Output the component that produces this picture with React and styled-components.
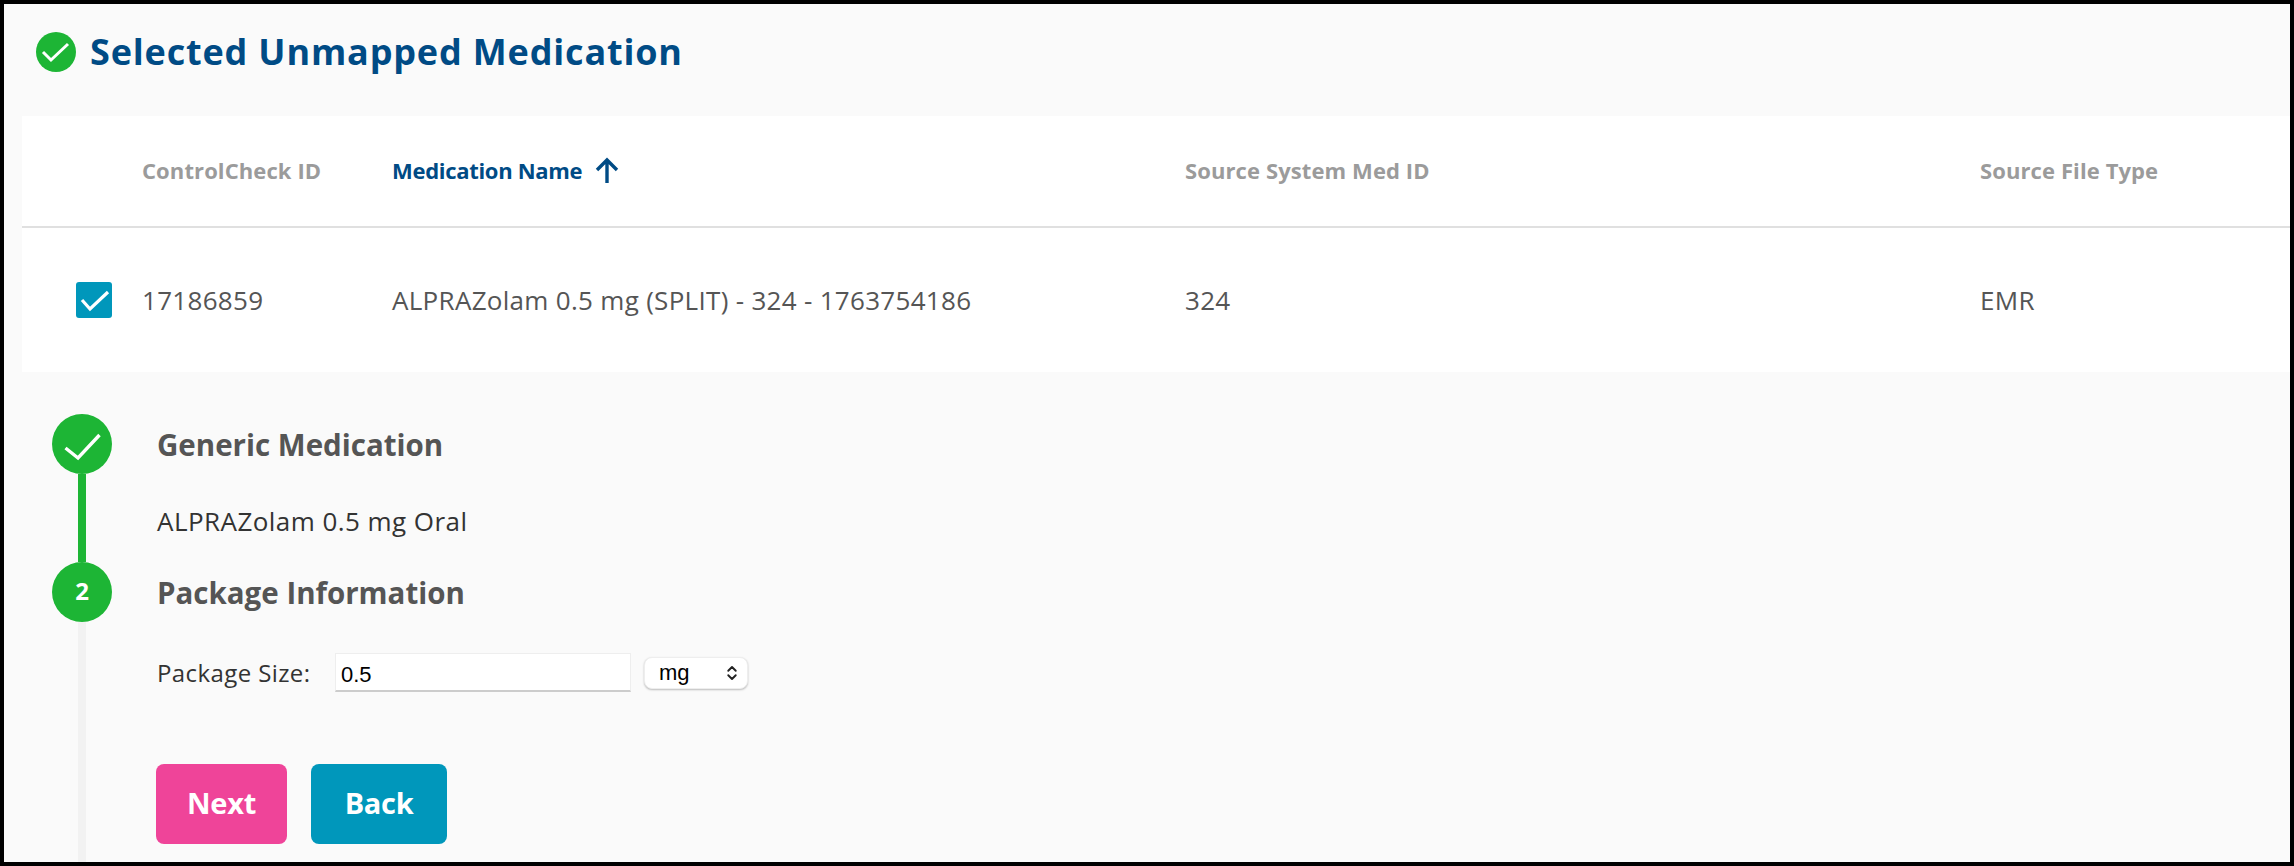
import React from "react";
import styled, { createGlobalStyle } from "styled-components";
import { ChevronsUpDown } from "lucide-react";

const FONT = `"Open Sans", "Liberation Sans", sans-serif`;

const COLORS = {
  navy: "#004b85",
  green: "#1db535",
  teal: "#0097bb",
  pink: "#ef4499",
  muted: "#9b9b9b",
  text: "#555555",
  dark: "#333333",
  page: "#fafafa",
};

const COLUMNS = "120px 250px 793px 795px 1fr";

const GlobalStyle = createGlobalStyle`
  html, body {
    margin: 0;
    padding: 0;
    background: #000;
  }
  * {
    box-sizing: border-box;
  }
`;

// The tick is drawn a little differently at each size, so the path comes in as a prop
const Tick = ({ size, stroke, d }) => (
  <svg width={size} height={size} viewBox={`0 0 ${size} ${size}`} fill="none">
    <path d={d} stroke="#fff" strokeWidth={stroke} />
  </svg>
);

const SortArrow = () => (
  <svg width="24" height="26" viewBox="0 0 24 26" fill="none">
    <path
      d="M12 26V3M2 13L12 3L22 13"
      stroke="currentColor"
      strokeWidth="3.4"
    />
  </svg>
);

const App = () => (
  <>
    <GlobalStyle />
    <Frame>
      <Header>
        <HeaderBadge>
          <Tick size={40} stroke={3} d="M7 20 L15 28 L32 12" />
        </HeaderBadge>
        <Title>Selected Unmapped Medication</Title>
      </Header>

      <Card>
        <HeadRow>
          <span />
          <HeadCell>ControlCheck ID</HeadCell>
          <HeadCell $active>
            Medication Name
            <SortArrow />
          </HeadCell>
          <HeadCell>Source System Med ID</HeadCell>
          <HeadCell>Source File Type</HeadCell>
        </HeadRow>
        <BodyRow>
          <CheckCell>
            <CheckBox>
              <Tick size={36} stroke={3.2} d="M6 18 L14 27 L32 10" />
            </CheckBox>
          </CheckCell>
          <BodyCell>17186859</BodyCell>
          <BodyCell>ALPRAZolam 0.5 mg (SPLIT) - 324 - 1763754186</BodyCell>
          <BodyCell>324</BodyCell>
          <BodyCell>EMR</BodyCell>
        </BodyRow>
      </Card>

      <Steps>
        <Step $height={148}>
          <Rail>
            <StepCircle>
              <Tick size={60} stroke={3.4} d="M13.5 34 L26 44 L47.5 21" />
            </StepCircle>
            <RailLine $done />
          </Rail>
          <StepBody>
            <StepTitle>Generic Medication</StepTitle>
            <SelectedValue>ALPRAZolam 0.5 mg Oral</SelectedValue>
          </StepBody>
        </Step>

        <Step>
          <Rail>
            <StepCircle>2</StepCircle>
            <RailLine />
          </Rail>
          <StepBody>
            <StepTitle>Package Information</StepTitle>
            <Field>
              <FieldLabel htmlFor="package-size">Package Size:</FieldLabel>
              <SizeInput id="package-size" defaultValue="0.5" />
              <UnitWrap>
                <UnitSelect defaultValue="mg">
                  <option value="mg">mg</option>
                </UnitSelect>
                <UnitArrows>
                  <ChevronsUpDown size={18} strokeWidth={2.5} />
                </UnitArrows>
              </UnitWrap>
            </Field>
            <Actions>
              <ActionButton $color={COLORS.pink} $width={131}>
                Next
              </ActionButton>
              <ActionButton $color={COLORS.teal} $width={136}>
                Back
              </ActionButton>
            </Actions>
          </StepBody>
        </Step>
      </Steps>
    </Frame>
  </>
);

const Frame = styled.div`
  width: 2294px;
  height: 866px;
  border: 4px solid #000;
  background: ${COLORS.page};
  font-family: ${FONT};
  overflow: hidden;
  display: flex;
  flex-direction: column;
`;

const Header = styled.header`
  height: 112px;
  padding: 28px 0 0 32px;
  display: flex;
  align-items: flex-start;
  gap: 14px;
`;

const HeaderBadge = styled.div`
  width: 40px;
  height: 40px;
  border-radius: 50%;
  background: ${COLORS.green};
`;

const Title = styled.h1`
  margin: 0;
  font-size: 36px;
  line-height: 40px;
  font-weight: 700;
  letter-spacing: 0.83px;
  color: ${COLORS.navy};
`;

const Card = styled.section`
  margin-left: 18px;
  background: #fff;
`;

const HeadRow = styled.div`
  height: 112px;
  display: grid;
  grid-template-columns: ${COLUMNS};
  align-items: center;
  border-bottom: 2px solid #e0e0e0;
  padding-bottom: 2px;
`;

const HeadCell = styled.div`
  display: flex;
  align-items: center;
  gap: 13px;
  font-size: 22px;
  font-weight: 700;
  letter-spacing: ${(p) => (p.$active ? "-0.3px" : "0.1px")};
  color: ${(p) => (p.$active ? COLORS.navy : COLORS.muted)};
`;

const BodyRow = styled.div`
  height: 144px;
  display: grid;
  grid-template-columns: ${COLUMNS};
  align-items: center;
`;

const CheckCell = styled.div`
  display: flex;
  justify-content: flex-end;
  padding-right: 30px;
`;

const CheckBox = styled.div`
  width: 36px;
  height: 36px;
  border-radius: 3px;
  background: ${COLORS.teal};
`;

const BodyCell = styled.div`
  font-size: 26px;
  letter-spacing: 0.3px;
  color: ${COLORS.text};
`;

const Steps = styled.div`
  flex: 1;
  padding: 42px 0 0 48px;
  display: flex;
  flex-direction: column;
  min-height: 0;
`;

const Step = styled.div`
  display: flex;
  gap: 45px;
  ${(p) => (p.$height ? `height: ${p.$height}px;` : "flex: 1;")}
`;

const Rail = styled.div`
  width: 60px;
  flex-shrink: 0;
  display: flex;
  flex-direction: column;
  align-items: center;
`;

const StepCircle = styled.div`
  width: 60px;
  height: 60px;
  flex-shrink: 0;
  padding-bottom: 4px;
  border-radius: 50%;
  background: ${COLORS.green};
  color: #fff;
  font-size: 24px;
  font-weight: 700;
  display: flex;
  align-items: center;
  justify-content: center;

  svg {
    margin-bottom: -4px;
  }
`;

const RailLine = styled.div`
  flex: 1;
  width: 8px;
  background: ${(p) => (p.$done ? COLORS.green : "#f2f2f2")};
`;

const StepBody = styled.div`
  flex: 1;
`;

const StepTitle = styled.h2`
  margin: 0;
  padding-top: 13px;
  font-size: 29.5px;
  line-height: 36px;
  font-weight: 700;
  color: ${COLORS.text};
`;

const SelectedValue = styled.p`
  margin: 42px 0 0;
  font-size: 26px;
  line-height: 32px;
  letter-spacing: 0.45px;
  color: ${COLORS.dark};
`;

const Field = styled.div`
  margin-top: 42px;
  display: flex;
  align-items: center;
  height: 39px;
`;

const FieldLabel = styled.label`
  width: 178px;
  font-size: 24px;
  letter-spacing: 0.4px;
  color: ${COLORS.dark};
`;

const SizeInput = styled.input`
  width: 296px;
  height: 39px;
  padding: 6px 5px 0;
  border: 1px solid #eeeeee;
  border-bottom: 2px solid #cccccc;
  background: #fff;
  outline: none;
  font-family: "Liberation Sans", sans-serif;
  font-size: 22px;
  color: #000;
`;

const UnitWrap = styled.div`
  position: relative;
  margin-left: 13px;
  width: 104px;
  height: 32px;
`;

const UnitSelect = styled.select`
  appearance: none;
  width: 100%;
  height: 100%;
  padding: 0 0 0 14px;
  border: 1px solid #eeeeee;
  border-radius: 8px;
  background: #fff;
  box-shadow: 0 1px 2px rgba(0, 0, 0, 0.25);
  font-family: "Liberation Sans", sans-serif;
  font-size: 22px;
  color: #000;
`;

const UnitArrows = styled.span`
  position: absolute;
  top: 7px;
  right: 7px;
  display: flex;
  color: #222;
  pointer-events: none;
`;

const Actions = styled.div`
  margin: 72px 0 0 -1px;
  display: flex;
  gap: 24px;
`;

const ActionButton = styled.button`
  width: ${(p) => p.$width}px;
  height: 80px;
  padding: 0 0 4px;
  border: none;
  border-radius: 8px;
  background: ${(p) => p.$color};
  color: #fff;
  font-family: ${FONT};
  font-size: 29px;
  font-weight: 700;
  letter-spacing: -0.3px;
`;

export default App;
